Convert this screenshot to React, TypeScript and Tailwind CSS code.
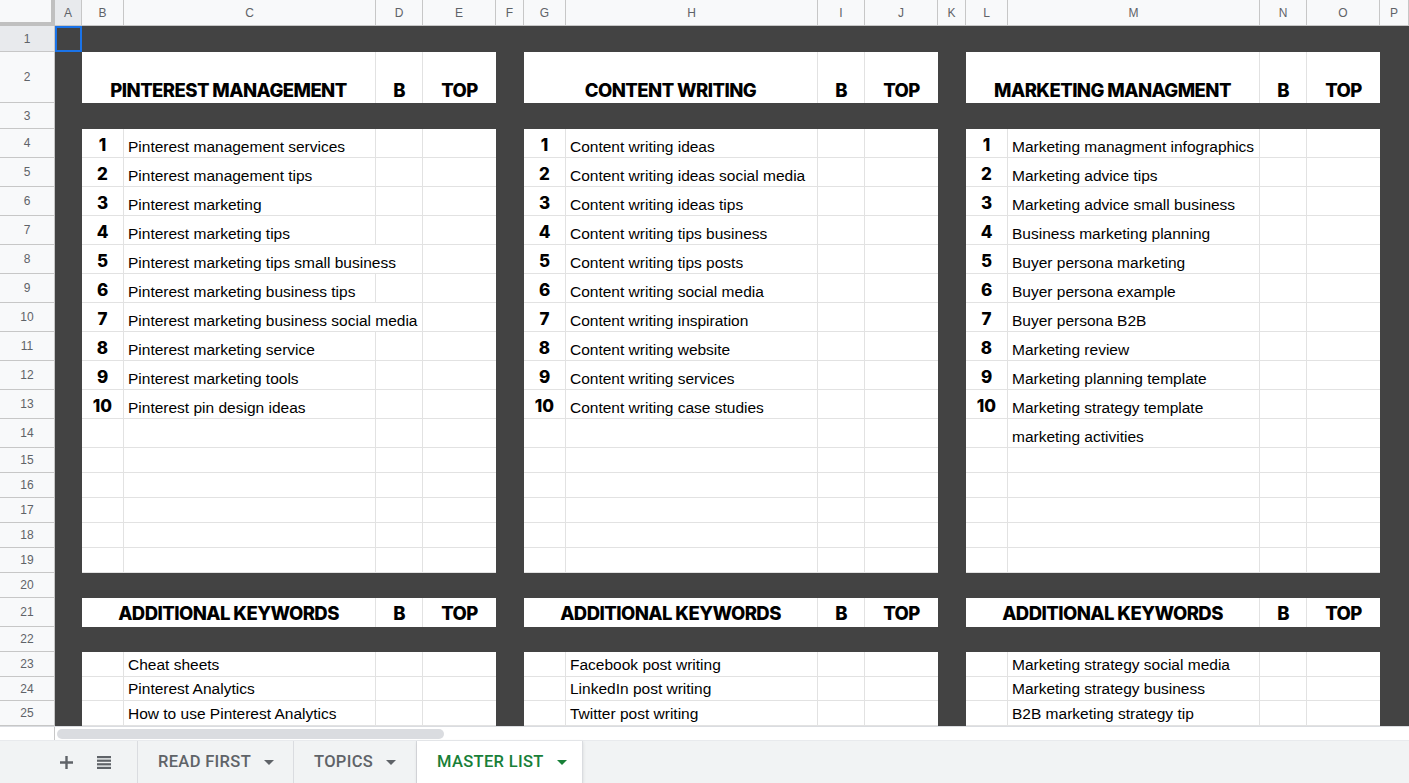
import React from "react";

type Panel = {
  title: string;
  items: string[];
  extra?: string;
  additional: string[];
};

const panels: Panel[] = [
  {
    title: "PINTEREST MANAGEMENT",
    items: [
      "Pinterest management services",
      "Pinterest management tips",
      "Pinterest marketing",
      "Pinterest marketing tips",
      "Pinterest marketing tips small business",
      "Pinterest marketing business tips",
      "Pinterest marketing business social media",
      "Pinterest marketing service",
      "Pinterest marketing tools",
      "Pinterest pin design ideas",
    ],
    additional: ["Cheat sheets", "Pinterest Analytics", "How to use Pinterest Analytics"],
  },
  {
    title: "CONTENT WRITING",
    items: [
      "Content writing ideas",
      "Content writing ideas social media",
      "Content writing ideas tips",
      "Content writing tips business",
      "Content writing tips posts",
      "Content writing social media",
      "Content writing inspiration",
      "Content writing website",
      "Content writing services",
      "Content writing case studies",
    ],
    additional: ["Facebook post writing", "LinkedIn post writing", "Twitter post writing"],
  },
  {
    title: "MARKETING MANAGMENT",
    items: [
      "Marketing managment infographics",
      "Marketing advice tips",
      "Marketing advice small business",
      "Business marketing planning",
      "Buyer persona marketing",
      "Buyer persona example",
      "Buyer persona B2B",
      "Marketing review",
      "Marketing planning template",
      "Marketing strategy template",
    ],
    extra: "marketing activities",
    additional: [
      "Marketing strategy social media",
      "Marketing strategy business",
      "B2B marketing strategy tip",
    ],
  },
];

const letters = ["A", "B", "C", "D", "E", "F", "G", "H", "I", "J", "K", "L", "M", "N", "O", "P"];
const darkRows = [1, 3, 20, 22];
const darkCols = [1, 6, 11, 16];
// text in these rows of the first panel spills over into the empty D column
const overflowRows = [8, 10];

const white = "bg-white border-b border-[#e2e2e2]";
const heading =
  "font-['Inter',sans-serif] font-extrabold text-[18.5px] leading-[21px] tracking-[-0.03em] text-black whitespace-nowrap";
const keyword =
  "font-['Liberation_Sans',Arial,sans-serif] text-[15.5px] leading-[17px] text-black whitespace-nowrap";

function ColumnHeader() {
  return (
    <>
      <div className="bg-[#f8f9fa] border-r-[4px] border-b-[4px] border-[#c0c0c0]" />
      {letters.map((l, i) => (
        <div
          key={l}
          className={`flex items-center justify-center border-r border-b border-[#c7c7c7] text-[12px] text-[#5f6368] ${
            i === 0 ? "bg-[#e8eaed]" : "bg-[#f8f9fa]"
          }`}
        >
          {l}
        </div>
      ))}
    </>
  );
}

function rowCells(r: number) {
  const cells: React.ReactNode[] = [];
  cells.push(
    <div
      key="h"
      className={`flex items-center justify-center border-r border-b border-[#c7c7c7] text-[12px] text-[#5f6368] ${
        r === 1 ? "bg-[#e8eaed]" : "bg-[#f8f9fa]"
      }`}
    >
      {r}
    </div>
  );

  for (let c = 1; c <= 16; c++) {
    if (r === 1 && c === 1) {
      cells.push(<div key={c} className="bg-[#434343] border-2 border-[#1a73e8]" />);
      continue;
    }
    if (darkRows.includes(r) || darkCols.includes(c)) {
      cells.push(<div key={c} className="bg-[#434343]" />);
      continue;
    }
    const p = Math.floor((c - 2) / 5);
    const off = (c - 2) % 5;
    const panel = panels[p];
    const edge = off < 3 ? " border-r" : "";

    // heading rows
    if (r === 2 || r === 21) {
      const align = r === 2 ? "pb-[2px]" : "pb-[3px]";
      if (off === 1) continue;
      const label = off === 0 ? (r === 2 ? panel.title : "ADDITIONAL KEYWORDS") : off === 2 ? "B" : "TOP";
      cells.push(
        <div
          key={c}
          className={`flex items-end justify-center bg-white border-[#e2e2e2] ${align} ${
            off === 0 ? "col-span-2 border-r" : edge
          }`}
        >
          <span className={heading}>{label}</span>
        </div>
      );
      continue;
    }

    // numbered keyword rows
    if (r >= 4 && r <= 14) {
      const idx = r - 4;
      if (off === 0) {
        cells.push(
          <div key={c} className={`flex items-end justify-center pb-[2px] ${white}${edge}`}>
            {idx < 10 && (
              <span className="font-['Inter',sans-serif] font-extrabold text-[17px] leading-[19px] text-black">
                {idx + 1}
              </span>
            )}
          </div>
        );
        continue;
      }
      if (off === 1) {
        const text = idx < 10 ? panel.items[idx] : panel.extra;
        const span = p === 0 && overflowRows.includes(r);
        cells.push(
          <div key={c} className={`flex items-end pl-[4px] pb-[2px] ${white}${edge} ${span ? "col-span-2" : ""}`}>
            {text && <span className={keyword}>{text}</span>}
          </div>
        );
        if (span) c++;
        continue;
      }
      cells.push(<div key={c} className={`${white}${edge}`} />);
      continue;
    }

    // additional keyword rows
    if (r >= 23) {
      const text = off === 1 ? panel.additional[r - 23] : "";
      cells.push(
        <div key={c} className={`flex items-end pl-[4px] pb-[3px] ${white}${edge}`}>
          {text && <span className={keyword}>{text}</span>}
        </div>
      );
      continue;
    }

    cells.push(<div key={c} className={`${white}${edge}`} />);
  }
  return cells;
}

function Caret({ color }: { color: string }) {
  return (
    <svg width="10" height="5" viewBox="0 0 10 5">
      <path d="M0 0h10L5 5z" fill={color} />
    </svg>
  );
}

function Tab({ label, width, active }: { label: string; width: string; active?: boolean }) {
  return (
    <div
      className={`flex items-center gap-[13px] pl-[20px] border-r border-[#dadce0] ${width} ${
        active ? "bg-white text-[#188038] shadow-[0_1px_3px_rgba(60,64,67,0.15)]" : "text-[#5f6368]"
      }`}
    >
      <span className="font-['Roboto',sans-serif] font-medium text-[16.5px] tracking-[0.02em] whitespace-nowrap">
        {label}
      </span>
      <Caret color={active ? "#188038" : "#5f6368"} />
    </div>
  );
}

export default function App() {
  const rows = Array.from({ length: 25 }, (_, i) => i + 1);
  return (
    <div className="w-[1409px] h-[783px] overflow-hidden bg-white flex flex-col font-['Liberation_Sans',Arial,sans-serif]">
      <div className="grid grid-cols-[55px_27px_42px_252px_47px_73px_28px_42px_252px_47px_73px_28px_42px_252px_47px_73px_1fr] grid-rows-[26px_26px_51px_26px_repeat(11,29px)_repeat(6,25px)_29px_25px_25px_24px_25px]">
        <ColumnHeader />
        {rows.map((r) => (
          <React.Fragment key={r}>{rowCells(r)}</React.Fragment>
        ))}
      </div>

      {/* horizontal scrollbar */}
      <div className="flex h-[14px] border-t border-[#dadce0] bg-white">
        <div className="w-[55px] border-r border-[#c7c7c7]" />
        <div className="flex items-center pl-[2px]">
          <div className="h-[10px] w-[387px] rounded-full bg-[#dadce0]" />
        </div>
      </div>

      {/* sheet tabs */}
      <div className="flex h-[43px] bg-[#f1f3f4] border-t border-[#e8eaed]">
        <div className="flex w-[138px] items-center gap-[24px] pl-[60px] border-r border-[#dadce0]">
          <svg width="13" height="13" viewBox="0 0 13 13">
            <path d="M5.3 0h2.4v5.3H13v2.4H7.7V13H5.3V7.7H0V5.3h5.3z" fill="#5f6368" />
          </svg>
          <svg width="14" height="13" viewBox="0 0 14 13">
            <rect x="0" y="0" width="14" height="2.2" fill="#5f6368" />
            <rect x="0" y="3.6" width="14" height="2.2" fill="#5f6368" />
            <rect x="0" y="7.2" width="14" height="2.2" fill="#5f6368" />
            <rect x="0" y="10.8" width="14" height="2.2" fill="#5f6368" />
          </svg>
        </div>
        <Tab label="READ FIRST" width="w-[156px]" />
        <Tab label="TOPICS" width="w-[123px]" />
        <Tab label="MASTER LIST" width="w-[166px]" active />
      </div>
    </div>
  );
}
